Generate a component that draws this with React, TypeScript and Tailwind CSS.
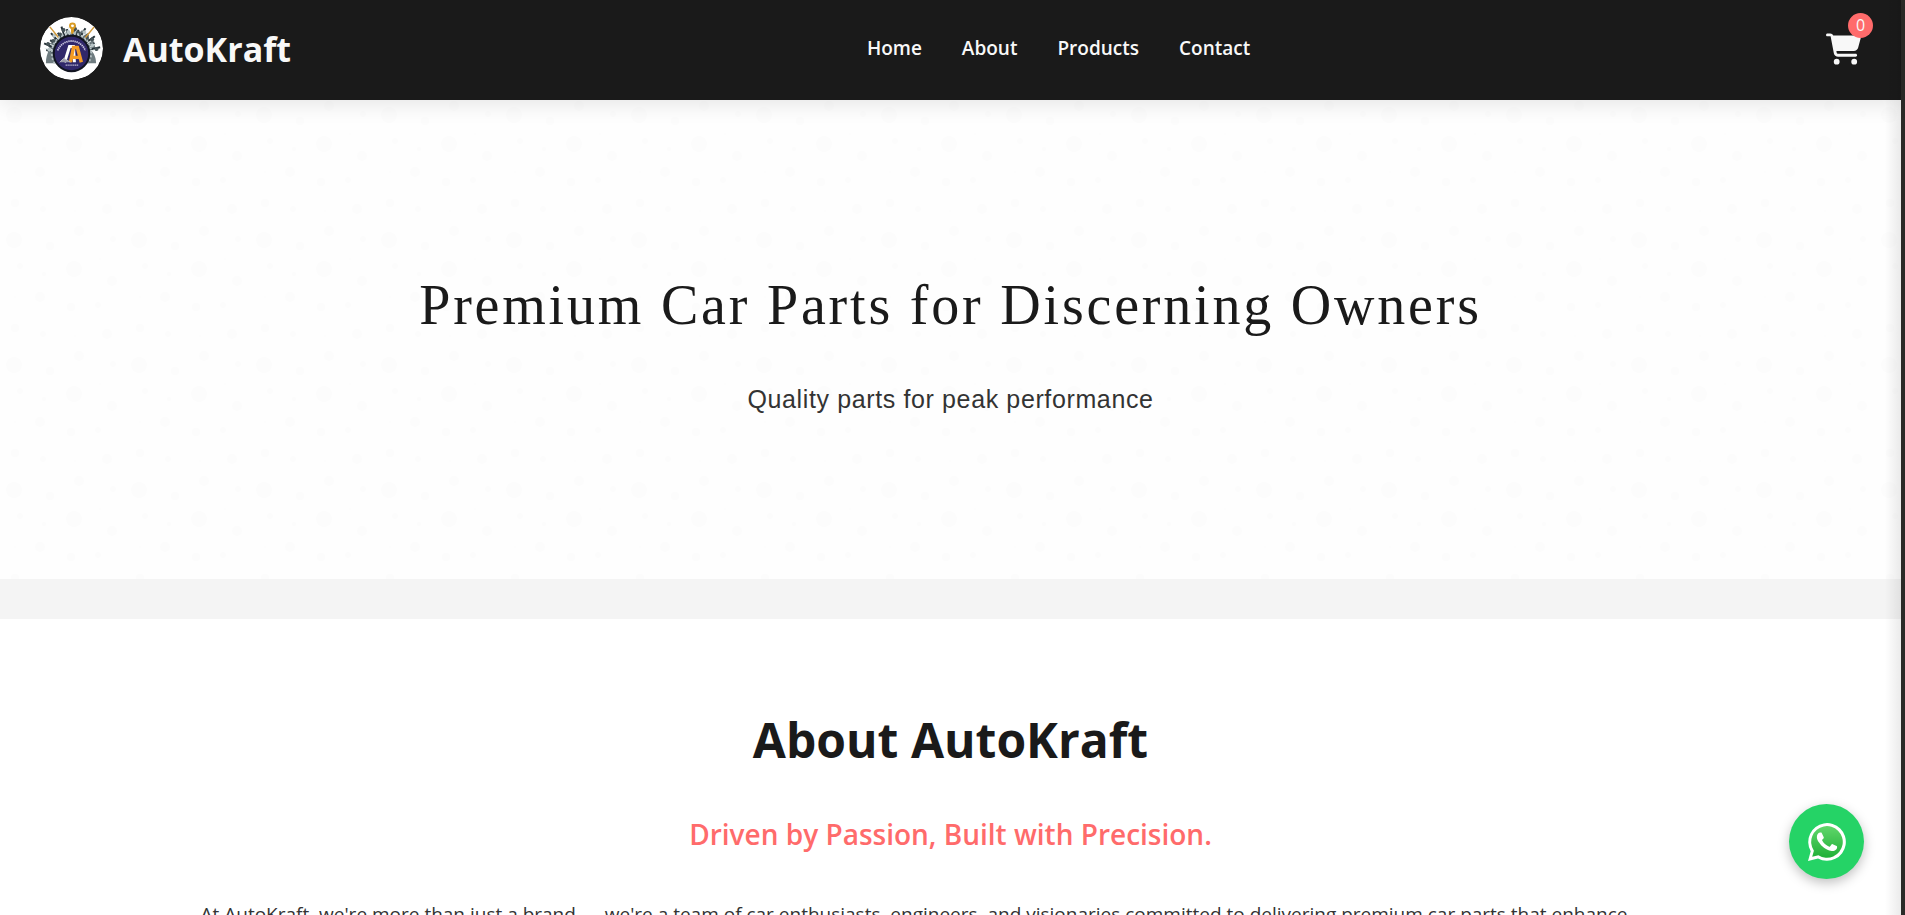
import { FaCartShopping } from "react-icons/fa6";

const navLinks = ["Home", "About", "Products", "Contact"];

const bubbles: [number, number, number][] = [
  [14, 15, 8], [74, 44, 8], [40, 72, 5], [112, 56, 5], [107, 109, 5],
  [79, 6, 5], [50, 21, 4], [20, 41, 3], [71, 82, 4], [98, 80, 3],
  [15, 103, 4], [43, 109, 3], [113, 14, 3], [100, 34, 1], [44, 49, 2],
  [15, 72, 1], [75, 111, 1],
];

const tools = [-78, -66, -54, -42, -30, -18, -8, 8, 18, 30, 42, 54, 66, 78];

function Logo() {
  return (
    <svg viewBox="0 0 64 64" className="size-[63px] rounded-full" aria-hidden="true">
      <circle cx="32" cy="32" r="32" fill="#fff" />
      <path d="M6 47c0-5 1-10 4-15l-3-4 5-2 3-6 4 2 1-7 4 4 3-5 3 4 5-7 4 6 4-4 1 6 5-3 1 7 5 2 1 6-4 3c4 4 5 9 5 13Z" fill="#6f7c80" />
      {tools.map((a, i) => (
        <g key={a} transform={`rotate(${a} 32 38)`}>
          <rect x="30" y={i % 2 ? 8 : 12} width="2" height="14" fill="#263238" />
          <rect x="32" y={i % 3 ? 14 : 10} width="1" height="8" fill="#e6eeee" />
          <circle cx="32" cy={i % 2 ? 12 : 15} r="2" fill={i % 3 ? "#465357" : "#b8c4c6"} />
        </g>
      ))}
      <path d="M3 48h58v13H3Z" fill="#fff" />
      <path d="m10 10 9 11M55 10l-9 11" stroke="#d29a3a" strokeWidth="1.5" />
      <path d="M33 8v9" stroke="#d99b24" strokeWidth="3" />
      <circle cx="33" cy="9" r="2.5" fill="#fff" stroke="#d99b24" strokeWidth="2" />
      <path d="M15 47a20 20 0 1 1 34 0" fill="none" stroke="#b4c0c2" strokeWidth="2" strokeDasharray="2 2" />
      <circle cx="32" cy="37" r="18" fill="#30276a" stroke="#121521" strokeWidth="2" />
      <path d="M18 34a15 15 0 0 1 28 0" fill="none" stroke="#c9c5df" strokeWidth="1.8" strokeDasharray="1.4 .7" />
      <path d="m25 46 5-16h4l1 16" fill="none" stroke="#fff" strokeWidth="3" />
      <path d="m31 46 3-15h4l4 15M33 41h7" fill="none" stroke="#f49b25" strokeWidth="3.5" />
      <path d="m20 46 4-4 7 4" fill="#9b9baa" stroke="#b8b8c4" />
      <path d="M26 49h13" stroke="#b7b4d0" strokeWidth="1.3" strokeDasharray="1.4 .5" />
    </svg>
  );
}

function WhatsAppMark() {
  return (
    <svg viewBox="0 0 40 40" className="size-10" aria-hidden="true">
      <defs>
        <linearGradient id="bubble" x1="0" y1="0" x2="0" y2="1">
          <stop offset="0" stopColor="#60d66a" />
          <stop offset="1" stopColor="#20b038" />
        </linearGradient>
      </defs>
      <path d="M1 39 3.7 29.2A18.8 18.8 0 1 1 11 36.4Z" fill="#fff" />
      <path d="m5.2 34.8 1.7-6A15.8 15.8 0 1 1 11.4 33.2Z" fill="url(#bubble)" />
      <path d="M15.2 11.3c-.4-.8-.8-.8-1.2-.8h-1c-.4 0-1 .2-1.500.7-.5.6-2 1.900-2 4.700s2 5.400 2.300 5.800c.3.400 4 6.300 9.700 8.500 4.800 1.900 5.700 1.500 6.800 1.400 1-.1 3.300-1.300 3.800-2.600.5-1.300.5-2.400.3-2.600-.1-.3-.5-.4-1.100-.7l-3.800-1.800c-.5-.2-.9-.3-1.300.3l-1.800 2.200c-.3.400-.7.400-1.200.1-.6-.3-2.400-.9-4.500-2.800-1.700-1.500-2.800-3.300-3.100-3.900-.3-.6 0-.9.200-1.200l.9-1c.3-.3.4-.5.600-.9.200-.4.100-.7-.1-1Z" fill="#fff" transform="translate(1.500 1.200) scale(.88)" />
    </svg>
  );
}

export default function App() {
  return (
    <div className="flex h-screen overflow-hidden bg-[#f4f4f4] font-['Open_Sans','Noto_Sans',sans-serif] text-[#1a1a1a]">
      <div className="relative min-w-0 flex-1">
        <header className="relative z-10 flex h-[100px] items-center justify-between bg-[#1a1a1a] px-10 pb-[3px] text-[#f8f8f8] shadow-[0_4px_20px_rgba(0,0,0,0.1)]">
          <a href="#home" className="flex items-center gap-5">
            <Logo />
            <span className="text-[34px] leading-none font-bold">AutoKraft</span>
          </a>
          <nav className="flex gap-10 text-[19px] font-semibold">
            {navLinks.map((link) => (
              <a key={link} href={`#${link.toLowerCase()}`}>{link}</a>
            ))}
          </nav>
          <button type="button" aria-label="Cart" className="relative">
            <FaCartShopping className="h-8 w-[35px]" />
            <span className="absolute -top-5 -right-3 flex size-[25px] items-center justify-center rounded-full bg-[#ff6b6b] text-[16px] leading-none">0</span>
          </button>
        </header>

        <main>
          <section id="home" className="relative flex h-[479px] flex-col items-center bg-[#fefefe] pt-[172px] text-center">
            <svg className="absolute inset-0 size-full" aria-hidden="true">
              <pattern id="dots" width="125" height="125" patternUnits="userSpaceOnUse">
                {bubbles.map(([x, y, r]) => (
                  <circle key={`${x}-${y}`} cx={x} cy={y} r={r} fill="#fcfcfc" />
                ))}
              </pattern>
              <rect width="100%" height="100%" fill="url(#dots)" />
            </svg>
            <h1 className="relative font-['Liberation_Serif',serif] text-[56px] leading-[67px] tracking-wider">
              Premium Car Parts for Discerning Owners
            </h1>
            <p className="relative mt-10 font-['Liberation_Sans',sans-serif] text-[25px] leading-[40px] tracking-wide text-[#333]">
              Quality parts for peak performance
            </p>
          </section>

          <section id="about" className="mt-10 flex flex-col items-center bg-white px-10 pt-20 pb-20">
            <h2 className="text-[48px] leading-[82px] font-bold">About AutoKraft</h2>
            <p className="mt-[30px] text-[28px] leading-[46px] font-semibold text-[#ff6b6b]">
              Driven by Passion, Built with Precision.
            </p>
            <p className="mt-10 w-full max-w-[1500px] text-[19px] leading-[34px] text-[#333]">
              At AutoKraft, we're more than just a brand — we're a team of car enthusiasts, engineers, and visionaries committed to delivering premium car parts that enhance
            </p>
          </section>
        </main>

        <div className="pointer-events-none absolute inset-y-0 right-0 z-20 w-4 bg-linear-to-l from-black/8 to-transparent" />
        <a
          href="#whatsapp"
          aria-label="Chat on WhatsApp"
          className="fixed right-[41px] bottom-9 flex size-[75px] items-center justify-center rounded-full bg-[#25d366] shadow-[0_4px_12px_rgba(0,0,0,0.25)]"
        >
          <WhatsAppMark />
        </a>
      </div>
      <aside className="w-1 shrink-0 bg-[#2b2b28]" />
    </div>
  );
}
